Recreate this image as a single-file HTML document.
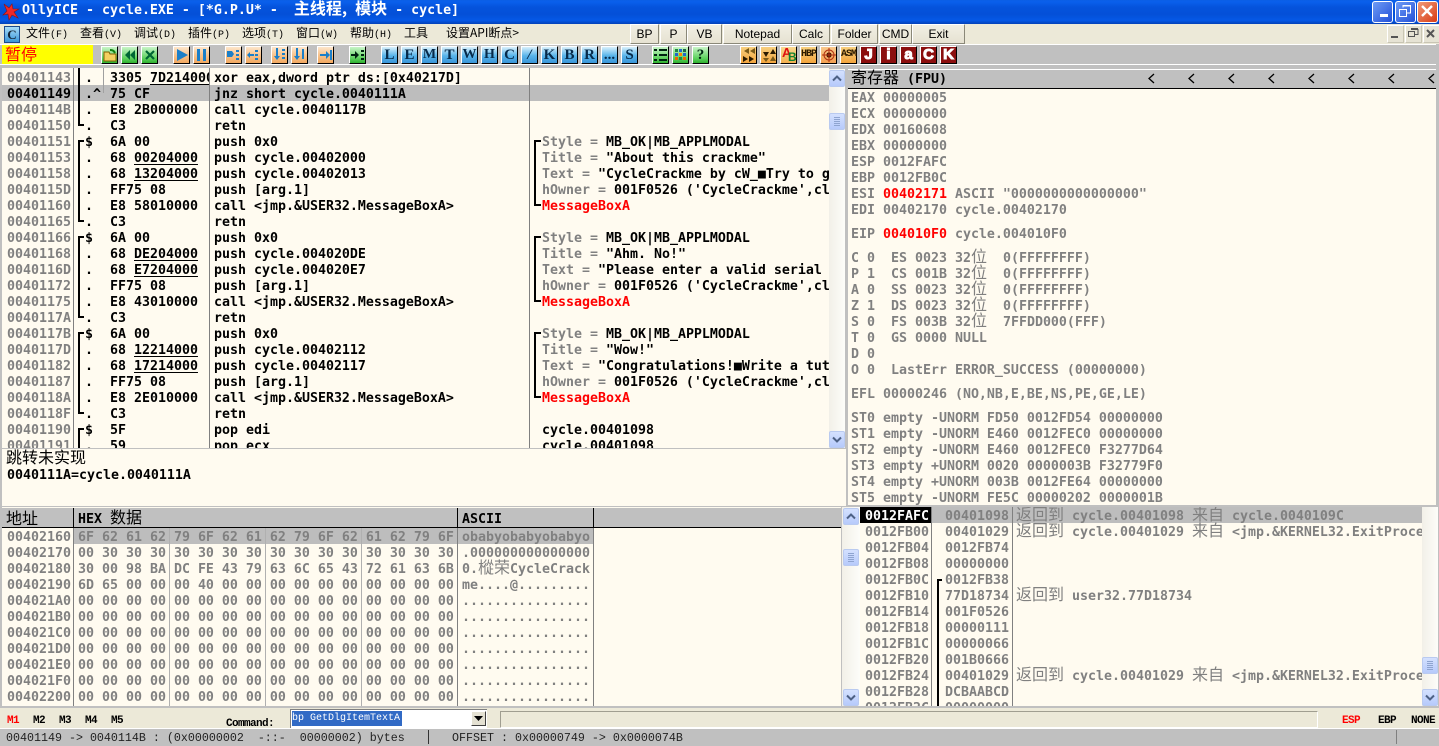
<!DOCTYPE html>
<html><head><meta charset="utf-8"><title>OllyICE</title>
<style>
html,body{margin:0;padding:0}
body{width:1439px;height:744px;overflow:hidden;position:relative;background:#c0c0c0;font-family:"DejaVu Sans Mono","Noto Sans CJK SC",monospace;font-size:13.29px;font-weight:bold;color:#000}
div,pre,svg{position:absolute;margin:0}
pre{font:inherit;line-height:16px;white-space:pre;padding-top:2px}
.g{color:#808080}.k{color:#000}.rd{color:#f00}
.c{font:normal 16px/0 "Noto Sans CJK SC","WenQuanYi Zen Hei",sans-serif}
.cb{font:normal 16px/16px "Noto Sans CJK SC","WenQuanYi Zen Hei",sans-serif}
u{text-underline-offset:2px}
.bx{background:#fffbf0;overflow:hidden}
.ln{background:#808080;width:1px}
.blk{background:#000}
.hd{background:#c0c0c0}
.m{top:23px;height:19px;font:normal 12px/20px "Noto Sans CJK SC",sans-serif;white-space:pre}
.m i{font:normal 10px "Liberation Mono",monospace}
.tb{top:24px;height:18px;background:linear-gradient(#f1efe4,#e6e2d2);border:1px solid;border-color:#fff #8a8878 #8a8878 #fff;box-sizing:content-box;font:normal 12px/18px "Liberation Sans",sans-serif;text-align:center}
.i{top:46px;width:15px;height:16px;border:1px solid;border-color:#fff #000 #000 #fff;text-align:center}
.bl{background:linear-gradient(#d8f0fc,#58b4ea 55%,#3a96d8);font:bold 15px/16px "Liberation Serif",serif;color:#062a4a}
.or{background:linear-gradient(#fde6cc,#f8c48e 50%,#f2a860)}
.gr{background:linear-gradient(#c8f4c8,#5ed25e 70%,#30b030)}
.ah{background:linear-gradient(#f7cf7e,#f3a53e);font:bold 10px/16px "Liberation Mono",monospace;color:#2b1a00}
.rj{background:#8b0e0e;color:#fff;font:900 15px/16px "Liberation Sans",sans-serif;-webkit-text-stroke:1px #fff}
.sb{background:linear-gradient(90deg,#f2f0e8,#fdfdf9);width:16px}
.sbb{left:0;width:14px;height:15px;background:linear-gradient(#d4e1fe,#b6cafb);border:1px solid #b9caf0;border-radius:2px}
.st{font:normal 11.67px/15px "Liberation Mono",monospace;color:#222;white-space:pre;top:731px}
.mm{top:714px;font:bold 11px/14px "Liberation Mono",monospace;letter-spacing:-.6px;white-space:pre}
</style></head><body>

<!-- title bar -->
<div style="left:0;top:0;width:1439px;height:24px;background:linear-gradient(#0b5fe6 0,#0a5fec 8%,#0553dc 30%,#0450d8 60%,#0558e6 85%,#0340b8 100%)"></div>
<svg style="left:2px;top:3px" width="18" height="18" viewBox="0 0 18 18"><polygon points="2,1 7,5 10,1 11,6 17,6 12,9 16,15 10,12 7,17 6,11 1,12 5,8" fill="#f02828" stroke="#901010" stroke-width=".6"/></svg>
<div style="left:22px;top:3px;color:#fff;white-space:pre;line-height:16px">OllyICE - cycle.EXE - [*G.P.U* -  <span class="c" style="font-weight:bold">主线程,</span> <span class="c" style="font-weight:bold">模块</span> - cycle]</div>
<div style="left:1372px;top:1px;width:19px;height:20px;border:1px solid #fff;border-radius:3px;background:linear-gradient(135deg,#6f9cf5,#2250d8)"></div>
<div style="left:1380px;top:14px;width:8px;height:3px;background:#fff"></div>
<div style="left:1395px;top:1px;width:19px;height:20px;border:1px solid #fff;border-radius:3px;background:linear-gradient(135deg,#6f9cf5,#2250d8)"></div>
<svg style="left:1398px;top:4px" width="14" height="14" viewBox="0 0 14 14" fill="none" stroke="#fff"><rect x="1.5" y="5.5" width="7" height="7" stroke-width="1"/><path d="M1 5.5H9M5 3.5V1.5H12.5V9H9M5 2H13" stroke-width="1"/></svg>
<div style="left:1417px;top:1px;width:19px;height:20px;border:1px solid #fff;border-radius:3px;background:linear-gradient(135deg,#f09a78,#d83c14)"></div>
<svg style="left:1420px;top:4px" width="14" height="14" viewBox="0 0 14 14"><path d="M2 2L12 12M12 2L2 12" stroke="#fff" stroke-width="2.4"/></svg>

<!-- menu bar -->
<div style="left:0;top:24px;width:1439px;height:20px;background:#ece9d8"></div>
<div style="left:4px;top:26px;width:14px;height:15px;background:linear-gradient(#a8dcf8,#3a96d8);border:1px solid #1c4a8c;font:bold 13px/15px 'Liberation Serif',serif;text-align:center;color:#123">C</div>
<div class="m" style="left:26px">文件<i>(F)</i></div>
<div class="m" style="left:80px">查看<i>(V)</i></div>
<div class="m" style="left:134px">调试<i>(D)</i></div>
<div class="m" style="left:188px">插件<i>(P)</i></div>
<div class="m" style="left:242px">选项<i>(T)</i></div>
<div class="m" style="left:296px">窗口<i>(W)</i></div>
<div class="m" style="left:350px">帮助<i>(H)</i></div>
<div class="m" style="left:404px">工具</div>
<div class="m" style="left:446px">设置API断点&gt;</div>
<div class="tb" style="left:630px;width:27px">BP</div>
<div class="tb" style="left:660px;width:25px">P</div>
<div class="tb" style="left:687px;width:33px">VB</div>
<div class="tb" style="left:723px;width:67px">Notepad</div>
<div class="tb" style="left:792px;width:36px">Calc</div>
<div class="tb" style="left:831px;width:45px">Folder</div>
<div class="tb" style="left:879px;width:31px">CMD</div>
<div class="tb" style="left:912px;width:51px">Exit</div>
<div style="left:1387px;top:25px;width:15px;height:16px;background:#e6e3d4;border:1px solid;border-color:#fff #c8c5b4 #c8c5b4 #fff"></div>
<div style="left:1391px;top:36px;width:7px;height:2px;background:#555"></div>
<div style="left:1405px;top:25px;width:15px;height:16px;background:#e6e3d4;border:1px solid;border-color:#fff #c8c5b4 #c8c5b4 #fff"></div>
<svg style="left:1408px;top:28px" width="11" height="10" viewBox="0 0 11 10" fill="none" stroke="#555"><rect x="0.5" y="3.5" width="6" height="5"/><path d="M3 1.5H10V6.5H7M3 .5H10"/></svg>
<div style="left:1423px;top:25px;width:15px;height:16px;background:#e6e3d4;border:1px solid;border-color:#fff #c8c5b4 #c8c5b4 #fff"></div>
<svg style="left:1426px;top:29px" width="10" height="10" viewBox="0 0 10 10"><path d="M1 1L8 8M8 1L1 8" stroke="#555" stroke-width="2"/></svg>

<!-- toolbar -->
<div style="left:0;top:44px;width:1436px;height:1px;background:#fff"></div>
<div style="left:0;top:64px;width:1436px;height:1px;background:#fff"></div>
<div style="left:2px;top:45px;width:91px;height:19px;background:#ffff00"></div>
<div class="rd cb" style="left:5px;top:45px">暂停</div>

<div class="i gr" style="left:101px"><svg style="left:1px;top:2px" width="14" height="13" viewBox="0 0 14 13"><path d="M1 3h5l1 2h6v7H1z" fill="#f4d060" stroke="#806000"/><path d="M7 1c3 0 4 1 5 3" fill="none" stroke="#108010" stroke-width="2"/></svg></div>
<div class="i gr" style="left:121px"><svg style="left:2px;top:3px" width="12" height="10" viewBox="0 0 12 10"><path d="M6 0L1 5l5 5zM11 0L6 5l5 5z" fill="#063"/></svg></div>
<div class="i gr" style="left:141px"><svg style="left:3px;top:3px" width="10" height="10" viewBox="0 0 10 10"><path d="M1 1L9 9M9 1L1 9" stroke="#063" stroke-width="2.2"/></svg></div>
<div class="i or" style="left:173px"><svg style="left:2px;top:2px" width="12" height="12" viewBox="0 0 12 12"><path d="M1 0L12 6L1 12z" fill="#1c7fc8"/></svg></div>
<div class="i or" style="left:193px"><svg style="left:3px;top:2px" width="10" height="12" viewBox="0 0 10 12"><path d="M0 0h3v12H0zM6 0h3v12H6z" fill="#1c7fc8"/></svg></div>
<div class="i or" style="left:225px"><svg style="left:1px;top:2px" width="14" height="12" viewBox="0 0 14 12"><path d="M0 2h5l2 3 -2 3H0zM9 1h3v2H9zM9 5h3v2H9zM9 9h3v2H9z" fill="#1c7fc8"/></svg></div>
<div class="i or" style="left:245px"><svg style="left:1px;top:2px" width="14" height="12" viewBox="0 0 14 12"><path d="M0 6l3-3v2h4v2H3v2zM8 1h3v2H8zM8 5h3v2H8zM8 9h3v2H8z" fill="#1c7fc8"/></svg></div>
<div class="i or" style="left:271px"><svg style="left:1px;top:1px" width="14" height="14" viewBox="0 0 14 14"><path d="M3 0h2v8h2l-3 4-3-4h2zM9 1h3v2H9zM9 5h3v2H9zM9 9h3v2H9z" fill="#1c7fc8"/></svg></div>
<div class="i or" style="left:291px"><svg style="left:1px;top:1px" width="14" height="14" viewBox="0 0 14 14"><path d="M3 0h2v8h2l-3 4-3-4h2zM9 1h2v10H9z" fill="#1c7fc8"/></svg></div>
<div class="i or" style="left:317px"><svg style="left:1px;top:2px" width="14" height="12" viewBox="0 0 14 12"><path d="M1 5h6V2l4 4-4 4V7H1zM11 1h2v10h-2z" fill="#1c7fc8"/></svg></div>
<div class="i gr" style="left:349px"><svg style="left:1px;top:2px" width="14" height="12" viewBox="0 0 14 12"><path d="M0 5h4V2l4 4-4 4V7H0zM10 1h3v2h-3zM10 5h3v2h-3zM10 9h3v2h-3z" fill="#021"/></svg></div>

<div class="i bl" style="left:381px">L</div><div class="i bl" style="left:401px">E</div><div class="i bl" style="left:421px;font-size:14px">M</div><div class="i bl" style="left:441px">T</div><div class="i bl" style="left:461px;font-size:14px">W</div><div class="i bl" style="left:481px;font-size:14px">H</div><div class="i bl" style="left:501px">C</div><div class="i bl" style="left:521px;font-style:italic">/</div><div class="i bl" style="left:541px">K</div><div class="i bl" style="left:561px">B</div><div class="i bl" style="left:581px">R</div><div class="i bl" style="left:601px">...</div><div class="i bl" style="left:621px">S</div>

<div class="i gr" style="left:652px"><svg style="left:1px;top:2px" width="13" height="12" viewBox="0 0 13 12"><path d="M0 0h3v2H0zM5 0h8v2H5zM0 5h3v2H0zM5 5h8v2H5zM0 10h3v2H0zM5 10h8v2H5z" fill="#021"/></svg></div>
<div class="i gr" style="left:672px"><svg style="left:2px;top:2px" width="12" height="12" viewBox="0 0 12 12"><rect width="3" height="3" fill="#284"/><rect x="4" width="3" height="3" fill="#26c"/><rect x="8" width="3" height="3" fill="#264"/><rect y="4" width="3" height="3" fill="#26c"/><rect x="4" y="4" width="3" height="3" fill="#f80"/><rect x="8" y="4" width="3" height="3" fill="#26c"/><rect y="8" width="3" height="3" fill="#e60"/><rect x="4" y="8" width="3" height="3" fill="#284"/><rect x="8" y="8" width="3" height="3" fill="#e60"/></svg></div>
<div class="i gr" style="left:692px;font:bold 15px/16px 'Liberation Serif',serif;color:#021">?</div>

<div class="i ah" style="left:740px"><svg style="left:1px;top:1px" width="14" height="14" viewBox="0 0 14 14"><path d="M7 0v6L2 3zM13 0v6L8 3z" fill="#7a5a1a"/><path d="M1 8v6l5-3zM7 8v6l5-3z" fill="#2b1a00"/></svg></div>
<div class="i ah" style="left:760px"><svg style="left:1px;top:1px" width="14" height="14" viewBox="0 0 14 14"><path d="M1 4h6l-3 5zM8 6h6l-3-5z" fill="#2b1a00"/><path d="M1 10h6l-3 4zM8 13h6l-3-5z" fill="#7a5a1a"/></svg></div>
<div class="i ah" style="left:780px;background:linear-gradient(#f8d890,#f3b050)"><div style="left:1px;top:0;color:#e01010;font:bold 13px/12px 'Liberation Sans',sans-serif">A</div><div style="left:7px;top:4px;color:#108030;font:bold 12px/12px 'Liberation Sans',sans-serif">B</div></div>
<div class="i ah" style="left:800px;letter-spacing:-1px">HBP</div>
<div class="i ah" style="left:820px;background:linear-gradient(#f8c88c,#f3a050)"><svg style="left:1px;top:1px" width="14" height="14" viewBox="0 0 14 14"><circle cx="7" cy="7" r="5" fill="none" stroke="#b03010"/><circle cx="7" cy="7" r="2.6" fill="#401000"/><path d="M7 0v14M0 7h14" stroke="#b03010"/></svg></div>
<div class="i ah" style="left:840px;letter-spacing:-1px">ASM</div>
<div class="i rj" style="left:860px">J</div><div class="i rj" style="left:880px">i</div><div class="i rj" style="left:900px">a</div><div class="i rj" style="left:920px">C</div><div class="i rj" style="left:940px">K</div>

<!-- disassembly -->
<div class="bx" style="left:2px;top:68px;width:827px;height:380px"></div>
<div style="left:0;top:68px;width:829px;height:380px;overflow:hidden">
<div style="left:2px;top:17px;width:827px;height:16px;background:#bdbdbd"></div>
<div class="ln" style="left:73px;top:0;height:380px"></div>
<div class="ln" style="left:209px;top:0;height:380px"></div>
<div class="ln" style="left:529px;top:0;height:380px"></div>
<div class="ln" style="left:103px;top:0;height:25px;background:#a0a0a0"></div>
<div class="blk" style="left:78px;top:0;width:2px;height:58px"></div><div class="blk" style="left:78px;top:56px;width:6px;height:2px"></div>
<div class="blk" style="left:78px;top:72px;width:2px;height:82px"></div><div class="blk" style="left:78px;top:72px;width:6px;height:2px"></div><div class="blk" style="left:78px;top:152px;width:6px;height:2px"></div>
<div class="blk" style="left:78px;top:168px;width:2px;height:82px"></div><div class="blk" style="left:78px;top:168px;width:6px;height:2px"></div><div class="blk" style="left:78px;top:248px;width:6px;height:2px"></div>
<div class="blk" style="left:78px;top:264px;width:2px;height:82px"></div><div class="blk" style="left:78px;top:264px;width:6px;height:2px"></div><div class="blk" style="left:78px;top:344px;width:6px;height:2px"></div>
<div class="blk" style="left:78px;top:360px;width:2px;height:30px"></div><div class="blk" style="left:78px;top:360px;width:6px;height:2px"></div>
<div class="blk" style="left:534px;top:72px;width:2px;height:66px"></div><div class="blk" style="left:534px;top:72px;width:7px;height:2px"></div><div class="blk" style="left:534px;top:136px;width:7px;height:2px"></div>
<div class="blk" style="left:534px;top:168px;width:2px;height:66px"></div><div class="blk" style="left:534px;top:168px;width:7px;height:2px"></div><div class="blk" style="left:534px;top:232px;width:7px;height:2px"></div>
<div class="blk" style="left:534px;top:264px;width:2px;height:66px"></div><div class="blk" style="left:534px;top:264px;width:7px;height:2px"></div><div class="blk" style="left:534px;top:328px;width:7px;height:2px"></div>
<pre class="g" style="left:7px;top:1px">00401143
<span class="k">00401149</span>
0040114B
00401150
00401151
00401153
00401158
0040115D
00401160
00401165
00401166
00401168
0040116D
00401172
00401175
0040117A
0040117B
0040117D
00401182
00401187
0040118A
0040118F
00401190
00401191</pre>
<pre style="left:85px;top:1px">.
.^
.
.
$
.
.
.
.
.
$
.
.
.
.
.
$
.
.
.
.
.
$
.</pre>
<pre style="left:110px;top:1px;width:99px;overflow:hidden">3305 <u>7D214000</u>
75 CF
E8 2B000000
C3
6A 00
68 <u>00204000</u>
68 <u>13204000</u>
FF75 08
E8 58010000
C3
6A 00
68 <u>DE204000</u>
68 <u>E7204000</u>
FF75 08
E8 43010000
C3
6A 00
68 <u>12214000</u>
68 <u>17214000</u>
FF75 08
E8 2E010000
C3
5F
59</pre>
<pre style="left:214px;top:1px">xor eax,dword ptr ds:[0x40217D]
jnz short cycle.0040111A
call cycle.0040117B
retn
push 0x0
push cycle.00402000
push cycle.00402013
push [arg.1]
call &lt;jmp.&amp;USER32.MessageBoxA&gt;
retn
push 0x0
push cycle.004020DE
push cycle.004020E7
push [arg.1]
call &lt;jmp.&amp;USER32.MessageBoxA&gt;
retn
push 0x0
push cycle.00402112
push cycle.00402117
push [arg.1]
call &lt;jmp.&amp;USER32.MessageBoxA&gt;
retn
pop edi
pop ecx</pre>
<pre style="left:542px;top:65px;width:287px;overflow:hidden"><span class="g">Style =</span> MB_OK|MB_APPLMODAL
<span class="g">Title =</span> "About this crackme"
<span class="g">Text =</span> "CycleCrackme by cW_■Try to g
<span class="g">hOwner =</span> 001F0526 ('CycleCrackme',cl
<span class="rd">MessageBoxA</span>

<span class="g">Style =</span> MB_OK|MB_APPLMODAL
<span class="g">Title =</span> "Ahm. No!"
<span class="g">Text =</span> "Please enter a valid serial
<span class="g">hOwner =</span> 001F0526 ('CycleCrackme',cl
<span class="rd">MessageBoxA</span>

<span class="g">Style =</span> MB_OK|MB_APPLMODAL
<span class="g">Title =</span> "Wow!"
<span class="g">Text =</span> "Congratulations!■Write a tut
<span class="g">hOwner =</span> 001F0526 ('CycleCrackme',cl
<span class="rd">MessageBoxA</span>

cycle.00401098
cycle.00401098</pre>
</div>
<!-- disasm scrollbar -->
<div class="sb" style="left:829px;top:69px;height:379px">
<div class="sbb" style="top:1px"><svg style="left:2px;top:4px" width="10" height="7" viewBox="0 0 10 7"><path d="M1 5.5L5 1.5L9 5.5" fill="none" stroke="#4d6185" stroke-width="2"/></svg></div>
<div class="sbb" style="top:44px"><svg style="left:3px;top:3px" width="8" height="9" viewBox="0 0 8 9"><path d="M1 .5h6M1 2.5h6M1 4.5h6M1 6.5h6M1 8.5h6" stroke="#8ea4d0"/></svg></div>
<div class="sbb" style="top:362px"><svg style="left:2px;top:4px" width="10" height="7" viewBox="0 0 10 7"><path d="M1 1.5L5 5.5L9 1.5" fill="none" stroke="#4d6185" stroke-width="2"/></svg></div>
</div>

<!-- registers -->
<div class="bx" style="left:848px;top:69px;width:588px;height:436px"></div>
<div style="left:848px;top:69px;width:588px;height:1px;background:#fff"></div>
<div class="hd" style="left:848px;top:70px;width:588px;height:18px"></div>
<div class="blk" style="left:848px;top:88px;width:588px;height:1px"></div>
<div style="left:851px;top:72px;white-space:pre;line-height:16px"><span class="c">寄存器</span> (FPU)</div>
<svg style="left:1147px;top:73px" width="290" height="11" fill="none" stroke="#000" stroke-width="1.3"><path d="M7 1L2 5.5L7 10M47 1L42 5.5L47 10M87 1L82 5.5L87 10M127 1L122 5.5L127 10M167 1L162 5.5L167 10M207 1L202 5.5L207 10M247 1L242 5.5L247 10M287 1L282 5.5L287 10"/></svg>
<div style="left:848px;top:89px;width:588px;height:416px;overflow:hidden">
<pre class="g" style="left:3px;top:0">EAX 00000005
ECX 00000000
EDX 00160608
EBX 00000000
ESP 0012FAFC
EBP 0012FB0C
ESI <span class="rd">00402171</span> ASCII "0000000000000000"
EDI 00402170 cycle.00402170</pre>
<pre class="g" style="left:3px;top:136px">EIP <span class="rd">004010F0</span> cycle.004010F0</pre>
<pre class="g" style="left:3px;top:160px">C 0  ES 0023 32<span class="c">位</span>  0(FFFFFFFF)
P 1  CS 001B 32<span class="c">位</span>  0(FFFFFFFF)
A 0  SS 0023 32<span class="c">位</span>  0(FFFFFFFF)
Z 1  DS 0023 32<span class="c">位</span>  0(FFFFFFFF)
S 0  FS 003B 32<span class="c">位</span>  7FFDD000(FFF)
T 0  GS 0000 NULL
D 0
O 0  LastErr ERROR_SUCCESS (00000000)</pre>
<pre class="g" style="left:3px;top:296px">EFL 00000246 (NO,NB,E,BE,NS,PE,GE,LE)</pre>
<pre class="g" style="left:3px;top:320px">ST0 empty -UNORM FD50 0012FD54 00000000
ST1 empty -UNORM E460 0012FEC0 00000000
ST2 empty -UNORM E460 0012FEC0 F3277D64
ST3 empty +UNORM 0020 0000003B F32779F0
ST4 empty +UNORM 003B 0012FE64 00000000
ST5 empty -UNORM FE5C 00000202 0000001B</pre>
</div>

<!-- info pane -->
<div class="bx" style="left:2px;top:449px;width:844px;height:57px"></div>
<div class="cb" style="left:6px;top:448px;white-space:pre">跳转未实现</div>
<pre style="left:7px;top:466px">0040111A=cycle.0040111A</pre>

<!-- dump -->
<div class="bx" style="left:2px;top:507px;width:839px;height:199px"></div>
<div class="hd" style="left:2px;top:508px;width:839px;height:19px"></div>
<div class="blk" style="left:2px;top:527px;width:839px;height:1px"></div>
<div class="blk" style="left:73px;top:508px;width:1px;height:20px"></div>
<div class="blk" style="left:457px;top:508px;width:1px;height:20px"></div>
<div class="blk" style="left:593px;top:508px;width:1px;height:20px"></div>
<div class="cb" style="left:6px;top:509px;white-space:pre">地址</div>
<div style="left:78px;top:512px;white-space:pre;line-height:16px">HEX <span class="c">数据</span></div>
<div style="left:462px;top:512px;line-height:16px">ASCII</div>
<div style="left:0;top:528px;width:841px;height:178px;overflow:hidden">
<div style="left:74px;top:0;width:383px;height:16px;background:#bdbdbd"></div>
<div style="left:458px;top:0;width:135px;height:16px;background:#bdbdbd"></div>
<div class="ln" style="left:73px;top:0;height:178px"></div>
<div class="ln" style="left:169px;top:0;height:178px;background:#b0b0b0"></div>
<div class="ln" style="left:265px;top:0;height:178px;background:#b0b0b0"></div>
<div class="ln" style="left:361px;top:0;height:178px;background:#b0b0b0"></div>
<div class="ln" style="left:457px;top:0;height:178px"></div>
<div class="ln" style="left:593px;top:0;height:178px"></div>
<pre class="g" style="left:7px;top:0">00402160
00402170
00402180
00402190
004021A0
004021B0
004021C0
004021D0
004021E0
004021F0
00402200</pre>
<pre class="g" style="left:78px;top:0">6F 62 61 62 79 6F 62 61 62 79 6F 62 61 62 79 6F
00 30 30 30 30 30 30 30 30 30 30 30 30 30 30 30
30 00 98 BA DC FE 43 79 63 6C 65 43 72 61 63 6B
6D 65 00 00 00 40 00 00 00 00 00 00 00 00 00 00
00 00 00 00 00 00 00 00 00 00 00 00 00 00 00 00
00 00 00 00 00 00 00 00 00 00 00 00 00 00 00 00
00 00 00 00 00 00 00 00 00 00 00 00 00 00 00 00
00 00 00 00 00 00 00 00 00 00 00 00 00 00 00 00
00 00 00 00 00 00 00 00 00 00 00 00 00 00 00 00
00 00 00 00 00 00 00 00 00 00 00 00 00 00 00 00
00 00 00 00 00 00 00 00 00 00 00 00 00 00 00 00</pre>
<pre class="g" style="left:462px;top:0;width:130px;overflow:hidden">obabyobabyobabyo
.000000000000000
0.<span class="c">樅荣</span>CycleCrack
me....@.........
................
................
................
................
................
................
................</pre>
</div>

<!-- stack scrollbar -->
<div class="sb" style="left:842px;top:507px;height:199px;width:18px">
<div class="sbb" style="left:1px;top:1px"><svg style="left:2px;top:4px" width="10" height="7" viewBox="0 0 10 7"><path d="M1 5.5L5 1.5L9 5.5" fill="none" stroke="#4d6185" stroke-width="2"/></svg></div>
<div class="sbb" style="left:1px;top:42px"><svg style="left:3px;top:3px" width="8" height="9" viewBox="0 0 8 9"><path d="M1 .5h6M1 2.5h6M1 4.5h6M1 6.5h6M1 8.5h6" stroke="#8ea4d0"/></svg></div>
<div class="sbb" style="left:1px;top:182px"><svg style="left:2px;top:4px" width="10" height="7" viewBox="0 0 10 7"><path d="M1 1.5L5 5.5L9 1.5" fill="none" stroke="#4d6185" stroke-width="2"/></svg></div>
</div>

<!-- stack -->
<div class="bx" style="left:860px;top:507px;width:562px;height:199px"></div>
<div style="left:860px;top:507px;width:562px;height:199px;overflow:hidden">
<div style="left:71px;top:0;width:491px;height:16px;background:#bdbdbd"></div>
<div class="blk" style="left:0;top:0;width:71px;height:16px"></div>
<div class="ln" style="left:71px;top:0;height:199px"></div>
<div class="ln" style="left:152px;top:0;height:199px"></div>
<div class="blk" style="left:77px;top:72px;width:2px;height:127px"></div>
<div class="blk" style="left:77px;top:72px;width:5px;height:2px"></div>
<pre class="g" style="left:5px;top:0"><span style="color:#fff">0012FAFC</span>
0012FB00
0012FB04
0012FB08
0012FB0C
0012FB10
0012FB14
0012FB18
0012FB1C
0012FB20
0012FB24
0012FB28
0012FB2C</pre>
<pre class="g" style="left:85px;top:0">00401098
00401029
0012FB74
00000000
0012FB38
77D18734
001F0526
00000111
00000066
001B0666
00401029
DCBAABCD
00000000</pre>
<pre class="g" style="left:156px;top:0;width:406px;height:197px;overflow:hidden"><span class="c">返回到</span> cycle.00401098 <span class="c">来自</span> cycle.0040109C
<span class="c">返回到</span> cycle.00401029 <span class="c">来自</span> &lt;jmp.&amp;KERNEL32.ExitProce



<span class="c">返回到</span> user32.77D18734




<span class="c">返回到</span> cycle.00401029 <span class="c">来自</span> &lt;jmp.&amp;KERNEL32.ExitProce</pre>
</div>
<div class="sb" style="left:1422px;top:507px;height:199px">
<div class="sbb" style="left:0;top:150px"><svg style="left:3px;top:3px" width="8" height="9" viewBox="0 0 8 9"><path d="M1 .5h6M1 2.5h6M1 4.5h6M1 6.5h6M1 8.5h6" stroke="#8ea4d0"/></svg></div>
<div class="sbb" style="left:0;top:182px"><svg style="left:2px;top:4px" width="10" height="7" viewBox="0 0 10 7"><path d="M1 1.5L5 5.5L9 1.5" fill="none" stroke="#4d6185" stroke-width="2"/></svg></div>
</div>

<!-- command bar -->
<div style="left:0;top:708px;width:1439px;height:20px;background:#ece9d8"></div>
<div style="left:0;top:728px;width:1439px;height:1px;background:#fff"></div>
<div class="mm rd" style="left:7px">M1</div><div class="mm" style="left:33px">M2</div><div class="mm" style="left:59px">M3</div><div class="mm" style="left:85px">M4</div><div class="mm" style="left:111px">M5</div>
<div class="mm" style="left:226px;top:717px">Command:</div>
<div style="left:290px;top:709px;width:197px;height:19px;background:#fff;border-top:1px solid #808080;border-left:1px solid #808080;box-sizing:border-box"></div>
<div style="left:292px;top:711px;width:110px;height:15px;background:#316ac5;color:#fff;font:normal 10px/16px 'Liberation Mono',monospace;white-space:pre">bp GetDlgItemTextA</div>
<div style="left:471px;top:711px;width:15px;height:15px;background:#e4e1d2;border:1px solid;border-color:#fff #404040 #404040 #fff;box-sizing:border-box"></div>
<svg style="left:474px;top:716px" width="9" height="5"><path d="M0 0H9L4.5 5z" fill="#000"/></svg>
<div style="left:500px;top:711px;width:816px;height:15px;border-top:1px solid #a09e90;border-left:1px solid #a09e90;border-right:1px solid #fff;border-bottom:1px solid #fff"></div>
<div class="mm rd" style="left:1342px">ESP</div><div class="mm" style="left:1378px">EBP</div><div class="mm" style="left:1411px">NONE</div>

<!-- status bar -->
<div class="st" style="left:6px">00401149 -&gt; 0040114B : (0x00000002  -::-  00000002) bytes</div>
<div style="left:428px;top:730px;width:1px;height:14px;background:#333"></div>
<div class="st" style="left:452px">OFFSET : 0x00000749 -&gt; 0x0000074B</div>
<div style="left:1396px;top:730px;width:1px;height:14px;background:#808080"></div>
</body></html>
